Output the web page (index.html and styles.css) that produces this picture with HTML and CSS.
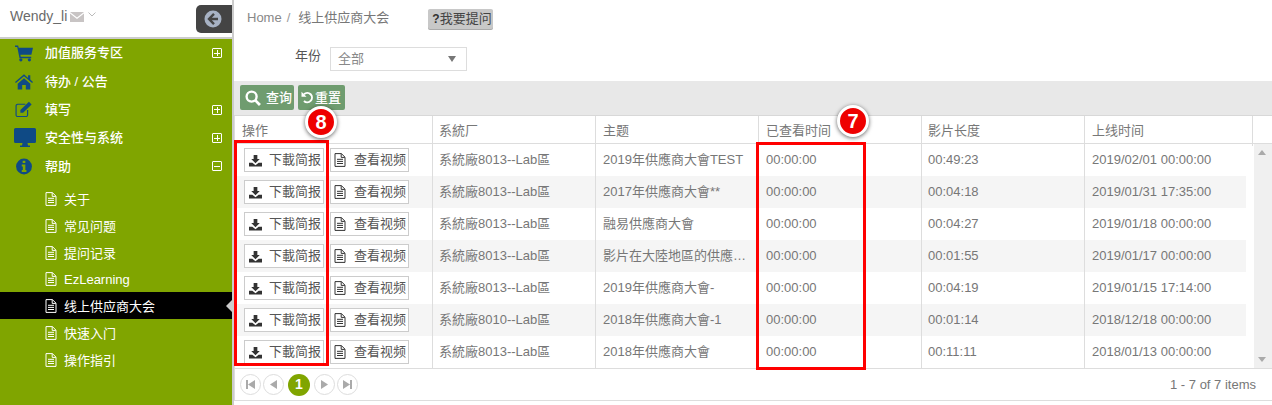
FILE: index.html
```html
<!DOCTYPE html>
<html lang="zh">
<head>
<meta charset="utf-8">
<title>线上供应商大会</title>
<link rel="stylesheet" href="styles.css">
</head>
<body>
<svg class="defs" width="0" height="0" aria-hidden="true">
  <symbol id="doc" viewBox="0 0 12 14"><path d="M1 .6h6.400L11 4.200v9.200H1z M7.200.8v3.600h3.600 M3 6.300h6 M3 8.400h6 M3 10.500h6" fill="none" stroke="currentColor" stroke-width="1"/></symbol>
  <symbol id="dl" viewBox="0 0 14 14"><path d="M5 1h4v4.500h2.600L7 10 2.400 5.500H5z" fill="currentColor"/><path d="M0 9.500h3.600L7 12l3.400-2.500H14V13.500H0z" fill="currentColor"/></symbol>
</svg>
<div class="app">
  <aside class="side">
    <div class="user">
      <span class="uname">Wendy_li</span>
      <svg class="mail" viewBox="0 0 14 10"><path d="M0 0h14L7 5.500z M0 1.500v8.500h14V1.500L7 7z" fill="#c8c4c4"/></svg>
      <svg class="caret" viewBox="0 0 8 5"><path d="M.5.500 4 4 7.500.500" fill="none" stroke="#bbb" stroke-width="1"/></svg>
      <div class="back">
        <svg viewBox="0 0 18 18" width="18" height="18"><circle cx="9" cy="9" r="8.500" fill="#a7b2c4"/><path d="M10 3.800 5 9l5 5.200 M5.500 9H14" fill="none" stroke="#444" stroke-width="2.400"/></svg>
      </div>
    </div>
    <nav class="nav">
      <div class="mi"><svg class="ico" viewBox="0 0 20 18"><path d="M0 0h3.500l.6 2.500H20l-1.800 8H6l.4 2H18v1.700H5L2.500 1.800H0z" fill="#0f4a85"/><circle cx="6.500" cy="16" r="1.800" fill="#0f4a85"/><circle cx="16" cy="16" r="1.800" fill="#0f4a85"/></svg><span class="mt">加值服务专区</span><span class="tog plus"></span></div>
      <div class="mi"><svg class="ico" viewBox="0 0 20 18"><path d="M10 1 0 9.500l1 1.300L10 3.300l9 7.500 1-1.300-3-2.600V2h-2.500v3.100z M3 11.500 10 5.500l7 6V18h-5v-5H8v5H3z" fill="#0f4a85"/></svg><span class="mt">待办 / 公告</span></div>
      <div class="mi"><svg class="ico" viewBox="0 0 20 18"><path d="M14 9.500V15a1.800 1.800 0 0 1-1.800 1.800H3A1.800 1.800 0 0 1 1.200 15V5A1.800 1.800 0 0 1 3 3.200h8.500" fill="none" stroke="#0f4a85" stroke-width="1.300"/><path d="M6 9.500 15.500 0.500l3 3L9 12.500H6z" fill="#0f4a85"/></svg><span class="mt">填写</span><span class="tog plus"></span></div>
      <div class="mi"><svg class="ico ico-w" viewBox="0 0 22 20"><path d="M1.500 0h19A1.500 1.500 0 0 1 22 1.500v12a1.500 1.500 0 0 1-1.500 1.500h-7l.5 2.500h2V19H6v-1.500h2l.5-2.500h-7A1.500 1.500 0 0 1 0 13.500v-12A1.500 1.500 0 0 1 1.500 0z" fill="#0f4a85"/></svg><span class="mt">安全性与系统</span><span class="tog plus"></span></div>
      <div class="mi"><svg class="ico" viewBox="0 0 20 18"><circle cx="10" cy="9" r="8.800" fill="#0f4a85"/><path d="M8.500 2.500h3v2.500h-3z M7.500 6.800h4v6h1.200V15H7.500v-2.200h1.200V9H7.500z" fill="#80a500"/></svg><span class="mt">帮助</span><span class="tog minus"></span></div>
    </nav>
    <ul class="sub">
      <li class="si"><svg class="doc"><use href="#doc"/></svg>关于</li>
      <li class="si"><svg class="doc"><use href="#doc"/></svg>常见问题</li>
      <li class="si"><svg class="doc"><use href="#doc"/></svg>提问记录</li>
      <li class="si si-latin"><svg class="doc"><use href="#doc"/></svg>EzLearning</li>
      <li class="si active"><svg class="doc"><use href="#doc"/></svg>线上供应商大会</li>
      <li class="si"><svg class="doc"><use href="#doc"/></svg>快速入门</li>
      <li class="si"><svg class="doc"><use href="#doc"/></svg>操作指引</li>
    </ul>
  </aside>
  <main class="main">
    <div class="crumbs">
      <span class="home">Home</span><span class="slash">/</span><span class="here">线上供应商大会</span>
      <span class="ask"><b class="q">?</b>我要提问</span>
    </div>
    <div class="filter">
      <label class="flabel">年份</label>
      <div class="select"><span>全部</span><i class="sarrow"></i></div>
    </div>
    <div class="toolbar">
      <button class="tbtn"><svg width="16" height="16" viewBox="0 0 15 15"><circle cx="6.200" cy="6.200" r="4.700" fill="none" stroke="#fff" stroke-width="2.200"/><path d="M9.500 9.500 14 14" stroke="#fff" stroke-width="2.600"/></svg><span>查询</span></button>
      <button class="tbtn tbtn2"><svg width="13" height="13" viewBox="0 0 13 13"><path d="M3 3.200A4.700 4.700 0 1 1 3 10" fill="none" stroke="#fff" stroke-width="2"/><path d="M.5 .8v5h5z" fill="#fff"/></svg><span>重置</span></button>
    </div>
    <div class="grid">
      <div class="ghead">
        <div class="th">操作</div><div class="th">系統厂</div><div class="th">主题</div><div class="th">已查看时间</div><div class="th">影片长度</div><div class="th">上线时间</div><div class="th th-end"></div>
      </div>
      <div class="gbody">
        <div class="rows">
          <div class="row">
            <div class="td ops"><span class="rbtn r1"><svg class="bi"><use href="#dl"/></svg>下載简报</span><span class="rbtn r2"><svg class="bd"><use href="#doc"/></svg>查看视频</span></div>
            <div class="td">系統廠8013--Lab區</div><div class="td">2019年供應商大會TEST</div><div class="td">00:00:00</div><div class="td">00:49:23</div><div class="td">2019/02/01 00:00:00</div>
          </div>
          <div class="row">
            <div class="td ops"><span class="rbtn r1"><svg class="bi"><use href="#dl"/></svg>下載简报</span><span class="rbtn r2"><svg class="bd"><use href="#doc"/></svg>查看视频</span></div>
            <div class="td">系統廠8013--Lab區</div><div class="td">2017年供應商大會**</div><div class="td">00:00:00</div><div class="td">00:04:18</div><div class="td">2019/01/31 17:35:00</div>
          </div>
          <div class="row">
            <div class="td ops"><span class="rbtn r1"><svg class="bi"><use href="#dl"/></svg>下載简报</span><span class="rbtn r2"><svg class="bd"><use href="#doc"/></svg>查看视频</span></div>
            <div class="td">系統廠8013--Lab區</div><div class="td">融易供應商大會</div><div class="td">00:00:00</div><div class="td">00:04:27</div><div class="td">2019/01/18 00:00:00</div>
          </div>
          <div class="row">
            <div class="td ops"><span class="rbtn r1"><svg class="bi"><use href="#dl"/></svg>下載简报</span><span class="rbtn r2"><svg class="bd"><use href="#doc"/></svg>查看视频</span></div>
            <div class="td">系統廠8013--Lab區</div><div class="td">影片在大陸地區的供應…</div><div class="td">00:00:00</div><div class="td">00:01:55</div><div class="td">2019/01/17 00:00:00</div>
          </div>
          <div class="row">
            <div class="td ops"><span class="rbtn r1"><svg class="bi"><use href="#dl"/></svg>下載简报</span><span class="rbtn r2"><svg class="bd"><use href="#doc"/></svg>查看视频</span></div>
            <div class="td">系統廠8013--Lab區</div><div class="td">2019年供應商大會-</div><div class="td">00:00:00</div><div class="td">00:04:19</div><div class="td">2019/01/15 17:14:00</div>
          </div>
          <div class="row">
            <div class="td ops"><span class="rbtn r1"><svg class="bi"><use href="#dl"/></svg>下載简报</span><span class="rbtn r2"><svg class="bd"><use href="#doc"/></svg>查看视频</span></div>
            <div class="td">系統廠8010--Lab區</div><div class="td">2018年供應商大會-1</div><div class="td">00:00:00</div><div class="td">00:01:14</div><div class="td">2018/12/18 00:00:00</div>
          </div>
          <div class="row">
            <div class="td ops"><span class="rbtn r1"><svg class="bi"><use href="#dl"/></svg>下載简报</span><span class="rbtn r2"><svg class="bd"><use href="#doc"/></svg>查看视频</span></div>
            <div class="td">系統廠8013--Lab區</div><div class="td">2018年供應商大會</div><div class="td">00:00:00</div><div class="td">00:11:11</div><div class="td">2018/01/13 00:00:00</div>
          </div>
        </div>
        <div class="scroll"><i class="up"></i><i class="down"></i></div>
      </div>
      <div class="pager">
        <span class="pg"><svg width="9" height="9" viewBox="0 0 9 9"><path d="M0 0h2v9H0z M9 0v9L2 4.500z" fill="#aaa"/></svg></span>
        <span class="pg"><svg width="9" height="9" viewBox="0 0 9 9"><path d="M8 0v9L1 4.500z" fill="#aaa"/></svg></span>
        <span class="pg cur">1</span>
        <span class="pg"><svg width="9" height="9" viewBox="0 0 9 9"><path d="M1 0v9l7-4.500z" fill="#aaa"/></svg></span>
        <span class="pg"><svg width="9" height="9" viewBox="0 0 9 9"><path d="M0 0v9l7-4.500z M7 0h2v9H7z" fill="#aaa"/></svg></span>
        <span class="count">1 - 7 of 7 items</span>
      </div>
    </div>
  </main>
</div>
<div class="mark mark8"></div>
<div class="mark mark7"></div>
<div class="badge badge8">8</div>
<div class="badge badge7">7</div>
</body>
</html>
```
FILE: styles.css
```css
* { box-sizing: border-box; }
html, body { margin: 0; padding: 0; height: 405px; overflow: hidden; background: #fff; }
body { position: relative; font: 13px/1.2 "Liberation Sans", "Noto Sans CJK SC", sans-serif; color: #777; }
.defs { position: absolute; }
.app { display: flex; height: 405px; }

.side { width: 234px; flex: none; background: #80a500; border-right: 2px solid #ccc; color: #fff; }
.user { height: 39px; background: #fff; border-bottom: 2px solid #ccc; display: flex; align-items: flex-start; padding: 8px 0 0 10px; position: relative; }
.uname { font-size: 14px; line-height: 16px; color: #6a6a6a; }
.mail { width: 14px; height: 10px; margin: 4px 0 0 3px; }
.caret { width: 8px; height: 5px; margin: 4px 0 0 4px; }
.back { position: absolute; left: 196px; top: 5px; width: 36px; height: 28px; background: #444; border-radius: 5px 0 0 5px; display: flex; align-items: center; justify-content: center; padding-right: 2px; }

.mi { display: flex; align-items: center; height: 28.3px; padding-left: 15px; position: relative; }
.ico { width: 18px; height: 17px; flex: none; }
.ico-w { width: 22px; height: 20px; margin-left: -1px; }
.mt { position: absolute; left: 45px; font-weight: 500; }
.tog { position: absolute; left: 212px; width: 10px; height: 10px; border: 1px solid #fff; border-radius: 1px; }
.tog::before { content: ""; position: absolute; left: 1px; right: 1px; top: 3.500px; height: 1px; background: #fff; }
.plus::after { content: ""; position: absolute; top: 1px; bottom: 1px; left: 3.500px; width: 1px; background: #fff; }

.sub { list-style: none; margin: 5px 0 0; padding: 0; }
.si { height: 27px; display: flex; align-items: center; padding: 1px 0 0 45px; position: relative; }
.si-latin { height: 26px; padding-top: 0; }
.doc { width: 12px; height: 14px; margin-right: 7px; flex: none; }
.active { background: #000; }
.active::after { content: ""; position: absolute; right: 0; top: 8px; border: 6px solid transparent; border-right: 6px solid #ccc; border-left: 0; }

.main { flex: 1; min-width: 0; display: flex; flex-direction: column; }
.crumbs { height: 47px; padding: 9px 0 0 13px; display: flex; align-items: flex-start; line-height: 17px; }
.home { color: #888; }
.slash { margin: 0 8px 0 5px; color: #999; }
.here { color: #777; }
.ask { margin-left: 39px; width: 65px; height: 20px; background: #c8c8c8; border-radius: 2px; box-shadow: 0 1px 0 #aaa; color: #444; line-height: 20px; padding-left: 4px; white-space: nowrap; }
.q { font-size: 12px; color: #333; }
.filter { height: 34px; display: flex; align-items: flex-start; padding-left: 61px; }
.flabel { color: #555; line-height: 18px; }
.select { width: 137px; height: 24px; margin-left: 9px; border: 1px solid #ddd; display: flex; align-items: center; justify-content: space-between; padding: 0 10px 0 7px; color: #888; }
.sarrow { border: 4px solid transparent; border-top: 6px solid #777; border-bottom: 0; }

.toolbar { height: 35px; background: #e8e8e8; border-bottom: 1px solid #d8d8d8; padding: 4px 0 0 6px; display: flex; gap: 4px; align-items: flex-start; }
.tbtn { height: 25px; width: 54px; border: 0; border-radius: 2px; background: #6f9c6f; color: #fff; font: inherit; font-weight: 500; display: flex; align-items: center; padding: 0 0 0 5px; gap: 5px; }
.tbtn2 { width: 47px; gap: 1px; padding-left: 3px; }

.grid { height: 285px; border-bottom: 1px solid #ddd; border-left: 1px solid #ddd; }
.ghead { display: grid; grid-template-columns: 197px 163px 163px 163px 163px 168px 1fr; height: 28px; border-bottom: 1px solid #ddd; }
.th { border-left: 1px solid #ddd; padding-left: 7px; line-height: 30px; color: #777; }
.th:first-child { border-left: 0; }
.gbody { display: flex; height: 225px; border-bottom: 1px solid #ddd; position: relative; }
.rows { width: 1011px; flex: none; }
.row { display: grid; grid-template-columns: 197px 163px 163px 163px 163px 162px; height: 32px; }
.row:nth-child(even) { background: #f5f5f5; }
.td { border-left: 1px solid #ddd; padding-left: 7px; line-height: 31px; white-space: nowrap; overflow: hidden; }
.th:nth-child(2), .td:nth-child(2), .th:nth-child(5), .td:nth-child(5) { padding-left: 6px; }
.ops { border-left: 0; padding: 4px 0 0 9px; display: flex; gap: 6px; align-items: flex-start; line-height: 20px; }
.rbtn { height: 24px; border: 1px solid #ccc; background: #fff; color: #555; display: flex; align-items: center; }
.r1 { width: 80px; padding-left: 4px; }
.r2 { width: 79px; padding-left: 3px; }
.bi { width: 13px; height: 13px; color: #333; margin-right: 7px; flex: none; }
.bd { width: 12px; height: 14px; color: #333; margin: 0 8px 0 0; flex: none; }
.scroll { position: absolute; right: 0; top: 0; bottom: 0; width: 18px; background: #f0f0f0; }
.up, .down { position: absolute; left: 4px; border: 4px solid transparent; }
.up { top: 6px; border-bottom: 5px solid #aaa; border-top: 0; }
.down { bottom: 6px; border-top: 5px solid #aaa; border-bottom: 0; }

.pager { height: 31px; display: flex; align-items: center; padding-left: 5px; gap: 2px; }
.pg { width: 21px; height: 21px; border-radius: 50%; border: 1px solid #ddd; display: flex; align-items: center; justify-content: center; background: #fff; }
.cur { width: 22px; height: 22px; background: #80a500; border: 0; color: #fff; font-weight: 700; font-size: 14px; margin: 0 2px; }
.count { margin-left: auto; margin-right: 16px; color: #777; }

.mark { position: absolute; border: 3px solid #f00; }
.mark8 { left: 234px; top: 140px; width: 95px; height: 226px; }
.mark7 { left: 756px; top: 142px; width: 110px; height: 228px; }
.badge { position: absolute; width: 32px; height: 32px; border-radius: 50%; background: #e00; border: 3px solid #fff; box-shadow: 0 1px 4px rgba(0,0,0,.6); color: #fff; font-weight: 700; font-size: 20px; line-height: 26px; text-align: center; }
.badge8 { left: 305px; top: 106px; }
.badge7 { left: 837px; top: 105px; }
```
